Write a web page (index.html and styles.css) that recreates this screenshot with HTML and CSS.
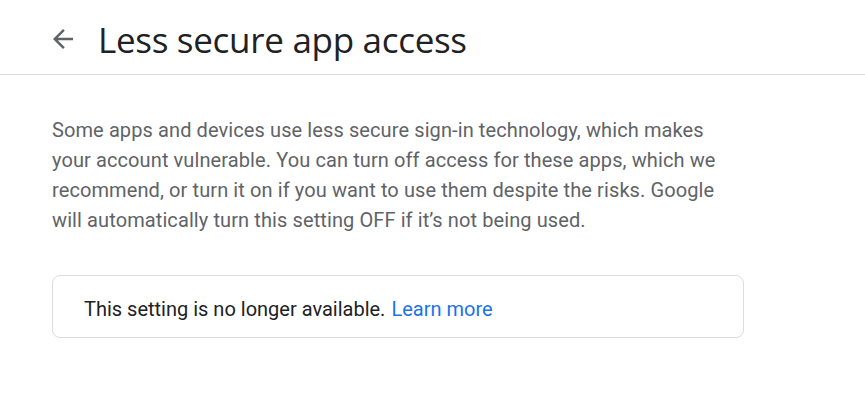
FILE: index.html
```html
<!DOCTYPE html>
<html>
<head>
<meta charset="utf-8">
<link rel="stylesheet" href="styles.css">
</head>
<body>
<header class="header">
  <svg class="back" width="24" height="24" viewBox="0 0 24 24"><path d="M20 11H7.83l5.59-5.59L12 4l-8 8 8 8 1.41-1.41L7.83 13H20v-2z" fill="#5f6368"/></svg>
  <h1 class="title">Less secure app access</h1>
</header>
<main class="content">
  <p class="desc">Some apps and devices use less secure sign-in technology, which makes your account vulnerable. You can turn off access for these apps, which we recommend, or turn it on if you want to use them despite the risks. Google will automatically turn this setting OFF if it’s not being used.</p>
  <div class="notice">This setting is no longer available. <a class="link" href="#">Learn more</a></div>
</main>
</body>
</html>
```
FILE: styles.css
```css
html, body { margin: 0; padding: 0; background: #fff; }
body { font-family: Roboto, "Liberation Sans", sans-serif; }
.header {
  display: flex;
  align-items: center;
  height: 75px;
  border-bottom: 1px solid #dadce0;
  padding: 4px 0 0 48px;
  box-sizing: border-box;
}
.back { width: 30px; height: 30px; margin-right: 20px; }
.title {
  margin: 0;
  font-family: "Open Sans", Roboto, sans-serif;
  font-weight: 400;
  font-size: 35px;
  color: #202124;
  letter-spacing: -0.3px;
}
.content { padding: 40px 0 0 52px; width: 692px; }
.desc {
  margin: 0;
  width: 672px;
  font-size: 20px;
  line-height: 30px;
  letter-spacing: 0.1px;
  color: #5f6368;
}
.notice {
  margin-top: 40px;
  height: 63px;
  box-sizing: border-box;
  border: 1px solid #dadce0;
  border-radius: 8px;
  padding: 5px 0 0 31px;
  display: flex;
  align-items: center;
  font-size: 20px;
  color: #202124;
}
.link { color: #1a73e8; text-decoration: none; margin-left: 6px; }
```
